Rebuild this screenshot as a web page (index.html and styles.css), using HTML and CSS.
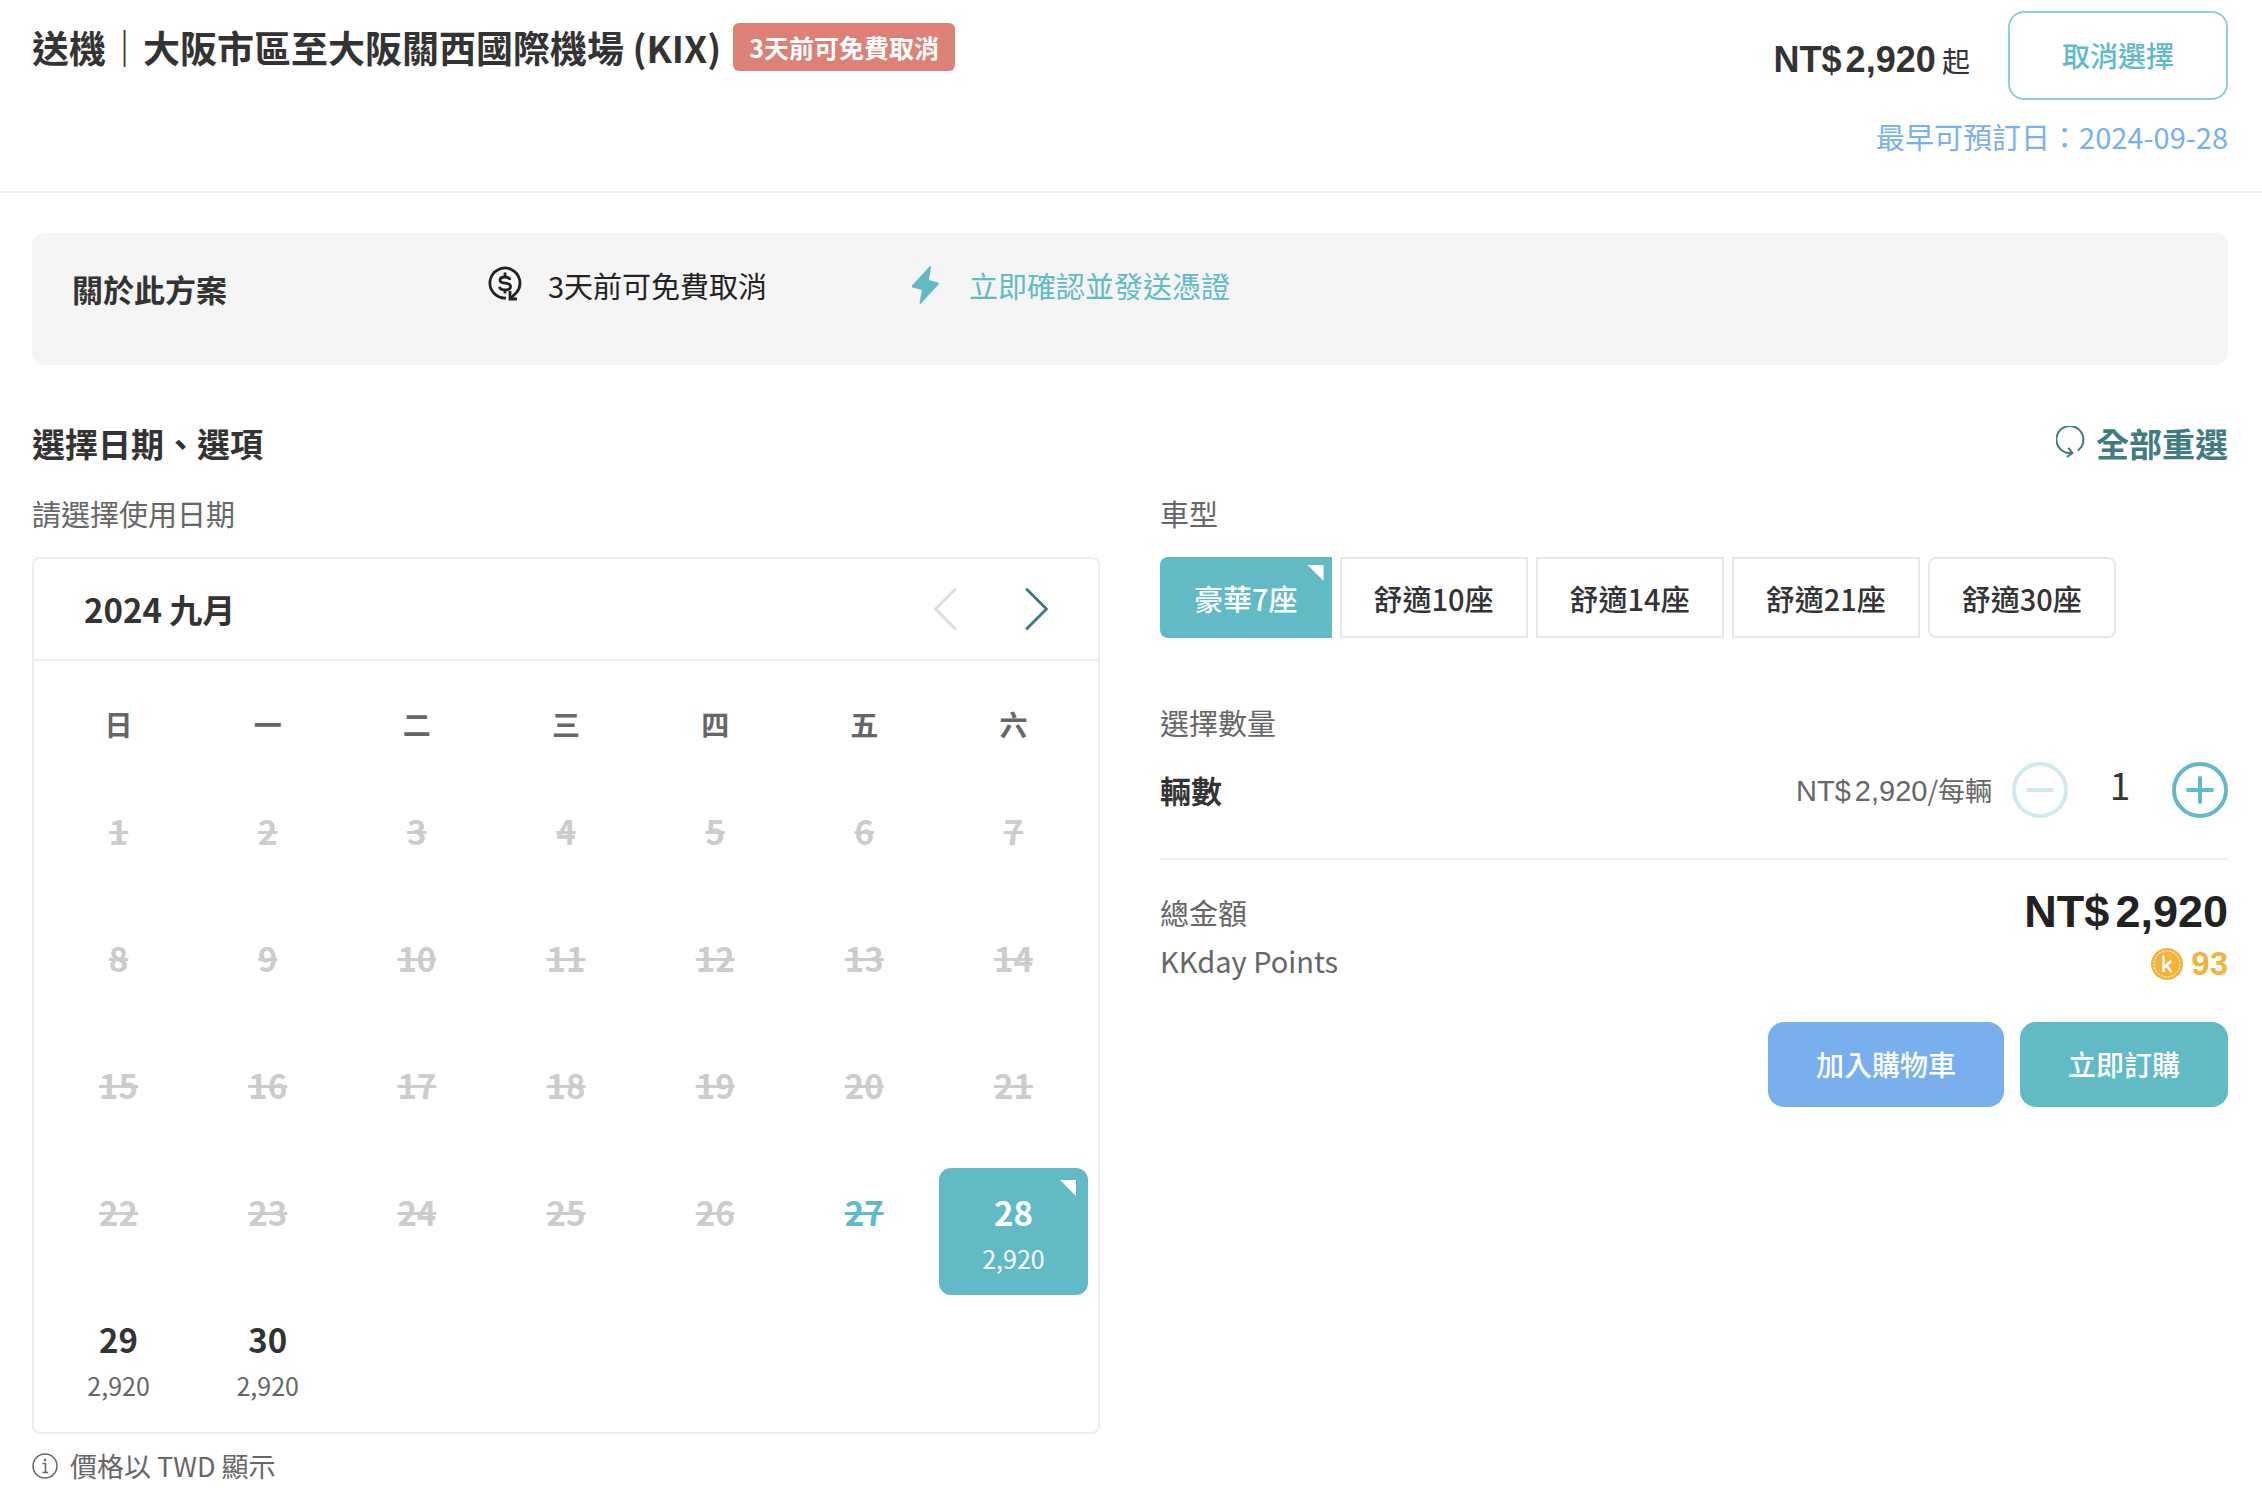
FILE: index.html
```html
<!DOCTYPE html>
<html lang="zh-Hant">
<head>
<meta charset="utf-8">
<meta name="viewport" content="width=device-width, initial-scale=1">
<title>送機｜大阪市區至大阪關西國際機場 (KIX)</title>
<link rel="stylesheet" href="styles.css">
</head>
<body>
<header class="package-header">
  <div class="package-name">
    <h1 class="package-title">送機｜大阪市區至大阪關西國際機場 (KIX)</h1>
    <span class="badge">3天前可免費取消</span>
  </div>
  <div class="package-side">
    <div class="package-action">
      <p class="from-price"><strong class="price"><span class="currency">NT$</span>2,920</strong> 起</p>
      <button class="btn btn-outline" type="button">取消選擇</button>
    </div>
    <p class="earliest">最早可預訂日：2024-09-28</p>
  </div>
</header>

<main class="package-body">
  <section class="about">
    <h2 class="about-title">關於此方案</h2>
    <ul class="features">
      <li class="feature">
        <svg class="feature-icon" viewBox="0 0 40 40" fill="none" stroke="currentColor" stroke-width="2.800" aria-hidden="true">
          <path d="M22 33A15 15 0 1 1 32.500 27.600L26.500 33.500" stroke-linejoin="round"/>
          <path d="M26 26V34H33"/>
          <path d="M26 15C25.500 12.500 23.500 12 21 12C18 12 16 13 16 15C16 17.500 19 18 21 18.200C24 18.500 26.500 19 26.500 21.500C26.500 24 24 25 21 25C18 25 16 24.500 15.500 21.800M21 7.500V12M21 25V28.500"/>
        </svg>
        <span>3天前可免費取消</span>
      </li>
      <li class="feature feature-instant">
        <svg class="feature-icon" viewBox="0 0 40 40" fill="currentColor" aria-hidden="true">
          <path d="M25 1L7 20.500Q6 22 7.500 22.500L17 25L14.500 38Q15 39.500 16 38.500L33.500 19.500Q34.500 18 33 17.500L24 15L26 2.500Q26 0.500 25 1Z"/>
        </svg>
        <span>立即確認並發送憑證</span>
      </li>
    </ul>
  </section>

  <div class="section-bar">
    <h2 class="section-title">選擇日期、選項</h2>
    <button class="reset" type="button">
      <svg class="reset-icon" viewBox="0 0 32 34" fill="none" stroke="currentColor" stroke-width="2" stroke-linecap="round" stroke-linejoin="round" aria-hidden="true">
        <path d="M22.500 24A13.500 13.500 0 1 0 15.500 27"/>
        <path d="M12.700 22.500L16.500 27.200L11.500 30.500"/>
      </svg>
      <span>全部重選</span>
    </button>
  </div>

  <div class="columns">
    <section class="column">
      <h3 class="label">請選擇使用日期</h3>
      <div class="calendar">
        <div class="calendar-bar">
          <h4 class="calendar-month">2024 九月</h4>
          <div class="calendar-nav">
            <button class="arrow" type="button" aria-label="上個月" disabled>
              <svg viewBox="0 0 26 44" fill="none" stroke="currentColor" stroke-width="3" stroke-linecap="round" stroke-linejoin="round"><path d="M23 2.500L3.500 22L23 41.500"/></svg>
            </button>
            <button class="arrow" type="button" aria-label="下個月">
              <svg viewBox="0 0 26 44" fill="none" stroke="currentColor" stroke-width="3" stroke-linecap="round" stroke-linejoin="round"><path d="M3 2.500L22.500 22L3 41.500"/></svg>
            </button>
          </div>
        </div>
        <div class="calendar-grid">
          <table class="days">
            <thead>
              <tr><th scope="col">日</th><th scope="col">一</th><th scope="col">二</th><th scope="col">三</th><th scope="col">四</th><th scope="col">五</th><th scope="col">六</th></tr>
            </thead>
            <tbody>
              <tr>
                <td><button class="day" type="button" disabled>1</button></td>
                <td><button class="day" type="button" disabled>2</button></td>
                <td><button class="day" type="button" disabled>3</button></td>
                <td><button class="day" type="button" disabled>4</button></td>
                <td><button class="day" type="button" disabled>5</button></td>
                <td><button class="day" type="button" disabled>6</button></td>
                <td><button class="day" type="button" disabled>7</button></td>
              </tr>
              <tr>
                <td><button class="day" type="button" disabled>8</button></td>
                <td><button class="day" type="button" disabled>9</button></td>
                <td><button class="day" type="button" disabled>10</button></td>
                <td><button class="day" type="button" disabled>11</button></td>
                <td><button class="day" type="button" disabled>12</button></td>
                <td><button class="day" type="button" disabled>13</button></td>
                <td><button class="day" type="button" disabled>14</button></td>
              </tr>
              <tr>
                <td><button class="day" type="button" disabled>15</button></td>
                <td><button class="day" type="button" disabled>16</button></td>
                <td><button class="day" type="button" disabled>17</button></td>
                <td><button class="day" type="button" disabled>18</button></td>
                <td><button class="day" type="button" disabled>19</button></td>
                <td><button class="day" type="button" disabled>20</button></td>
                <td><button class="day" type="button" disabled>21</button></td>
              </tr>
              <tr>
                <td><button class="day" type="button" disabled>22</button></td>
                <td><button class="day" type="button" disabled>23</button></td>
                <td><button class="day" type="button" disabled>24</button></td>
                <td><button class="day" type="button" disabled>25</button></td>
                <td><button class="day" type="button" disabled>26</button></td>
                <td><button class="day day-today" type="button" disabled>27</button></td>
                <td><button class="day day-selected corner" type="button" aria-pressed="true">28<span class="day-price">2,920</span></button></td>
              </tr>
              <tr>
                <td><button class="day" type="button">29<span class="day-price">2,920</span></button></td>
                <td><button class="day" type="button">30<span class="day-price">2,920</span></button></td>
                <td></td><td></td><td></td><td></td><td></td>
              </tr>
            </tbody>
          </table>
        </div>
      </div>
      <p class="note">
        <svg class="note-icon" viewBox="0 0 26 26" fill="none" stroke="currentColor" stroke-width="1.500" aria-hidden="true">
          <circle cx="13" cy="13" r="12"/>
          <path d="M10.500 10.500H13.500V19M10.500 19.500H16"/>
          <circle cx="13" cy="7" r="1.300" fill="currentColor" stroke="none"/>
        </svg>
        <span>價格以 TWD 顯示</span>
      </p>
    </section>

    <section class="column">
      <h3 class="label">車型</h3>
      <div class="options">
        <button class="option option-selected corner" type="button" aria-pressed="true">豪華7座</button>
        <button class="option" type="button">舒適10座</button>
        <button class="option" type="button">舒適14座</button>
        <button class="option" type="button">舒適21座</button>
        <button class="option" type="button">舒適30座</button>
      </div>

      <h3 class="label label-quantity">選擇數量</h3>
      <div class="quantity">
        <label class="quantity-name" for="quantity">輛數</label>
        <span class="unit-price"><span class="unit-amount"><span class="currency">NT$</span>2,920</span>/每輛</span>
        <div class="stepper">
          <button class="step" type="button" aria-label="減少" disabled>
            <svg viewBox="0 0 56 56" fill="none" stroke="currentColor" stroke-width="4" stroke-linecap="round"><circle cx="28" cy="28" r="26"/><path d="M16 28H40"/></svg>
          </button>
          <input class="step-value" id="quantity" type="text" inputmode="numeric" value="1">
          <button class="step" type="button" aria-label="增加">
            <svg viewBox="0 0 56 56" fill="none" stroke="currentColor" stroke-width="4" stroke-linecap="round"><circle cx="28" cy="28" r="26"/><path d="M16 28H40M28 16V40"/></svg>
          </button>
        </div>
      </div>

      <dl class="totals">
        <dt>總金額</dt>
        <dd class="total"><span class="currency">NT$</span>2,920</dd>
        <dt>KKday Points</dt>
        <dd class="points">
          <svg class="coin" viewBox="0 0 32 32" aria-hidden="true">
            <circle cx="16" cy="16" r="16" fill="#f1b440"/>
            <circle cx="16" cy="16" r="13" fill="none" stroke="#fff" stroke-width="1" stroke-dasharray="2 1.500"/>
            <path d="M12.500 7.500V24M20 13L13 19.500M15.500 17.500L20.500 24" fill="none" stroke="#fff" stroke-width="2.500"/>
          </svg>
          <span>93</span>
        </dd>
      </dl>

      <div class="actions">
        <button class="btn btn-cart" type="button">加入購物車</button>
        <button class="btn btn-book" type="button">立即訂購</button>
      </div>
    </section>
  </div>
</main>
</body>
</html>
```
FILE: styles.css
```css
:root {
  --teal: #61bac6;
  --teal-dark: #407c7f;
  --blue: #7aafee;
  --gold: #f1b440;
  --line: #eee;
  --ink: #333;
  --muted: #666;
  --cjk: "Noto Sans CJK TC", "Noto Sans", sans-serif;
  --latin: "Liberation Sans", "Noto Sans CJK TC", sans-serif;
}

* {
  box-sizing: border-box;
}

body {
  margin: 0;
  background: #fff;
  color: var(--ink);
  font-family: var(--cjk);
  font-size: 29px;
  line-height: 40px;
}

h1, h2, h3, h4, p, ul, dl, dd {
  margin: 0;
  padding: 0;
}

button, input {
  margin: 0;
  padding: 0;
  border: 0;
  background: none;
  color: inherit;
  font: inherit;
}

button {
  cursor: pointer;
}

button:disabled {
  cursor: default;
}

svg {
  display: block;
  flex: none;
}

/* Package header */
.package-header {
  display: flex;
  justify-content: space-between;
  align-items: flex-start;
  gap: 32px;
  padding: 11px 34px 35px 32px;
  border-bottom: 2px solid var(--line);
}

.package-name {
  display: flex;
  align-items: center;
  gap: 12px;
  padding-top: 12px;
}

.package-title {
  font-size: 37px;
  line-height: 48px;
}

.badge {
  flex: none;
  padding: 4px 16px;
  border-radius: 6px;
  background: #dd8077;
  color: #fff;
  font-size: 25px;
  font-weight: 700;
}

.package-side {
  flex: none;
  text-align: right;
}

.package-action {
  display: flex;
  align-items: center;
  justify-content: flex-end;
  gap: 38px;
}

.from-price {
  padding-top: 8px;
  font-size: 28px;
}

.price {
  font-family: var(--latin);
  font-size: 36px;
}

.currency {
  margin-right: 4px;
}

.earliest {
  margin-top: 16px;
  color: var(--blue);
}

.btn {
  padding: 22px 48px 23px;
  border-radius: 16px;
  color: #fff;
  font-size: 28px;
  font-weight: 500;
}

.btn-outline {
  padding: 22px 52px 23px;
  border: 2px solid #93cdd4;
  color: var(--teal);
}

.btn-cart {
  background: var(--blue);
}

.btn-book {
  background: var(--teal);
}

/* Package body */
.package-body {
  padding: 40px 34px 16px 32px;
}

.about {
  display: flex;
  padding: 32px 40px 40px;
  min-height: 132px;
  border-radius: 12px;
  background: #f5f5f5;
}

.about-title {
  flex: 0 0 412px;
  padding-top: 4px;
  font-size: 31px;
}

.features {
  display: flex;
  flex-wrap: wrap;
  gap: 0 138px;
  list-style: none;
  color: #222;
}

.feature {
  display: flex;
  gap: 24px;
}

.feature-icon {
  width: 40px;
  height: 40px;
}

.feature-instant {
  color: var(--teal);
}

.section-bar {
  display: flex;
  justify-content: space-between;
  align-items: center;
  margin-top: 54px;
  font-size: 33px;
  line-height: 48px;
}

.section-title {
  font-size: 33px;
}

.reset {
  display: flex;
  align-items: center;
  gap: 8px;
  color: var(--teal-dark);
  font-weight: 700;
}

.reset-icon {
  width: 32px;
  height: 34px;
}

.columns {
  display: grid;
  grid-template-columns: minmax(0, 1fr) minmax(0, 1fr);
  gap: 60px;
  margin-top: 26px;
}

.label {
  color: var(--muted);
  font-size: 29px;
  font-weight: 400;
}

/* Calendar */
.calendar {
  margin-top: 24px;
  border: 2px solid var(--line);
  border-radius: 8px;
}

.calendar-bar {
  display: flex;
  justify-content: space-between;
  align-items: center;
  height: 102px;
  padding: 0 48px 0 50px;
  border-bottom: 2px solid var(--line);
}

.calendar-month {
  font-size: 33px;
}

.calendar-nav {
  display: flex;
  gap: 66px;
}

.arrow {
  color: var(--teal-dark);
}

.arrow svg {
  width: 26px;
  height: 44px;
}

.arrow:disabled {
  color: #ddd;
}

.calendar-grid {
  padding: 0 10px 10px;
}

.days {
  width: 100%;
  border-collapse: collapse;
  table-layout: fixed;
}

.days th {
  height: 126px;
  padding: 0;
  color: var(--muted);
  font-size: 28px;
  font-weight: 700;
}

.days td {
  height: 127px;
  padding: 0;
}

.day {
  display: flex;
  flex-direction: column;
  align-items: center;
  width: 100%;
  height: 127px;
  padding-top: 24px;
  border-radius: 12px;
  font-size: 33px;
  font-weight: 700;
}

.day:disabled {
  color: #ccc;
  text-decoration: line-through;
}

.day-today:disabled {
  color: var(--teal);
}

.day-price {
  margin-top: 6px;
  color: var(--muted);
  font-size: 25px;
  font-weight: 400;
}

.day-selected {
  --corner-inset: 12px;
  background: var(--teal);
  color: #fff;
}

.day-selected .day-price {
  color: #fff;
}

/* White mark in the corner of whatever is selected */
.corner {
  position: relative;
}

.corner::after {
  content: "";
  position: absolute;
  top: var(--corner-inset);
  right: var(--corner-inset);
  width: 16px;
  height: 16px;
  background: #fff;
  clip-path: polygon(0 0, 100% 0, 100% 100%);
}

.note {
  display: flex;
  align-items: center;
  gap: 12px;
  margin-top: 12px;
  color: var(--muted);
  font-size: 27px;
}

.note-icon {
  width: 26px;
  height: 26px;
}

/* Options */
.options {
  display: flex;
  flex-wrap: wrap;
  gap: 8px;
  margin-top: 24px;
}

.option {
  padding: 19px 32px 18px;
  border: 2px solid #e8e8e8;
  font-weight: 500;
}

.option:first-child {
  border-radius: 8px 0 0 8px;
}

.option:last-child {
  border-radius: 8px;
}

.option-selected {
  --corner-inset: 6px;
  border-color: var(--teal);
  background: var(--teal);
  color: #fff;
}

.label-quantity {
  margin-top: 64px;
}

.quantity {
  display: flex;
  align-items: center;
  gap: 20px;
  margin-top: 20px;
  padding-bottom: 40px;
  border-bottom: 2px solid var(--line);
}

.quantity-name {
  flex: 1;
  font-size: 31px;
  font-weight: 700;
}

.unit-price {
  color: var(--muted);
  font-size: 27px;
}

.unit-amount {
  font-family: var(--latin);
  font-size: 29px;
}

.stepper {
  display: flex;
  align-items: center;
}

.step {
  color: var(--teal);
}

.step svg {
  width: 56px;
  height: 56px;
}

.step:disabled {
  color: #d0eaed;
}

.step-value {
  width: 104px;
  height: 56px;
  padding-bottom: 12px;
  font-size: 37px;
  text-align: center;
}

.totals {
  display: grid;
  grid-template-columns: 1fr auto;
  row-gap: 8px;
  margin-top: 32px;
  color: var(--muted);
}

.total {
  color: #222;
  font-family: var(--latin);
  font-size: 45px;
  font-weight: 700;
  text-align: right;
}

.total .currency {
  margin-right: 6px;
}

.points {
  display: flex;
  align-items: center;
  justify-content: flex-end;
  gap: 8px;
  padding-top: 4px;
  color: var(--gold);
  font-family: var(--latin);
  font-size: 33px;
  font-weight: 700;
}

.coin {
  width: 32px;
  height: 32px;
}

.actions {
  display: flex;
  justify-content: flex-end;
  gap: 16px;
  margin-top: 38px;
}
```
